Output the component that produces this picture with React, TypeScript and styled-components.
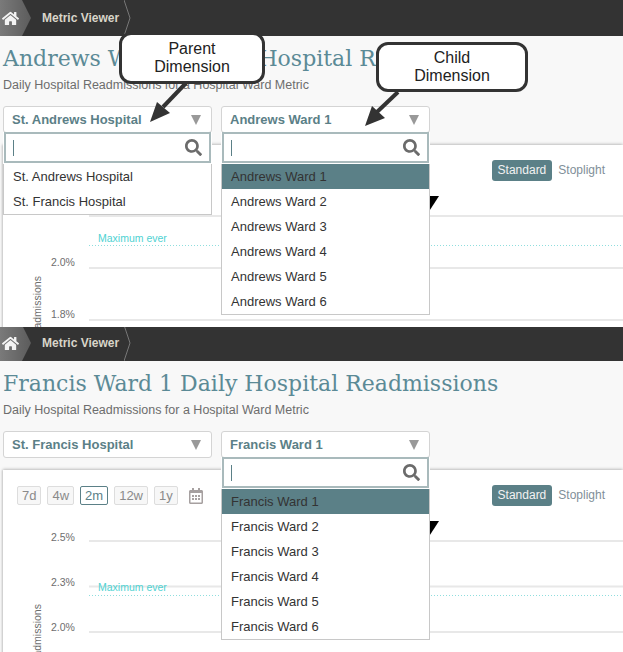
import React from 'react';
import styled, { createGlobalStyle } from 'styled-components';
import { FaHome, FaSearch, FaRegCalendarAlt } from 'react-icons/fa';

const TEAL = '#5b8087';
const SANS = '"Liberation Sans", Arial, sans-serif';

const GlobalStyle = createGlobalStyle`
  html, body {
    margin: 0;
    padding: 0;
    background: #fff;
    font-family: ${SANS};
  }
`;

const Page = styled.div`
  width: 623px;
  height: 652px;
  overflow: hidden;
`;

const Panel = styled.section<{ $height: number }>`
  position: relative;
  height: ${({ $height }) => $height}px;
  overflow: hidden;
  background: #f8f8f8;
`;

const TopBar = styled.header<{ $raised?: boolean }>`
  display: flex;
  align-items: center;
  height: 36px;
  margin-top: ${({ $raised }) => ($raised ? '-2px' : '0')};
  background: #333;
`;

const HomeTab = styled.div`
  display: flex;
  align-items: center;
  width: 31px;
  height: 36px;
  padding-left: 2px;
  box-sizing: border-box;
  color: #f4f4f4;
  font-size: 17px;
  background: linear-gradient(90deg, #7a7a7a, #5c5c5c);
  clip-path: polygon(0 0, 22px 0, 31px 50%, 22px 100%, 0 100%);
`;

const Crumb = styled.span`
  margin-left: 11px;
  color: #d9d5c9;
  font-size: 12px;
  font-weight: 700;
`;

const CrumbEnd = styled.svg`
  margin-left: 5px;
  flex: none;
`;

const Head = styled.div`
  padding: 0 3px;
  height: 109px;
  box-sizing: border-box;
`;

const Title = styled.h1`
  margin: 0;
  padding-top: 8px;
  color: #5b8a96;
  font-family: "DejaVu Serif", serif;
  font-size: 22px;
  font-weight: 400;
  line-height: 30px;
  white-space: nowrap;
`;

const Subtitle = styled.p`
  margin: 3px 0 0;
  color: #6d6d6d;
  font-size: 12.5px;
  line-height: 16px;
  white-space: nowrap;
`;

const Selectors = styled.div`
  display: flex;
  gap: 9px;
  margin-top: 13px;
`;

const SelectWrap = styled.div`
  position: relative;
  z-index: 2;
  width: 209px;
`;

const SelectBox = styled.div`
  display: flex;
  align-items: center;
  justify-content: space-between;
  height: 25px;
  padding: 0 10px 0 8px;
  background: #fff;
  border: 1px solid #d4d4d4;
  border-radius: 3px;
  color: ${TEAL};
  font-size: 13px;
  font-weight: 700;
`;

const Caret = styled.i`
  width: 0;
  height: 0;
  border-left: 5.5px solid transparent;
  border-right: 5.5px solid transparent;
  border-top: 10px solid #999;
`;

const Dropdown = styled.div`
  position: absolute;
  top: 26px;
  left: 0;
  width: 209px;
  box-sizing: border-box;
  background: #fff;
`;

const SearchBox = styled.div`
  display: flex;
  align-items: center;
  justify-content: space-between;
  height: 31px;
  margin-left: 1px;
  width: 207px;
  box-sizing: border-box;
  padding: 0 7px 0 7px;
  background: #fff;
  border: 2px solid #a9babc;
  color: #6b6b6b;
  font-size: 17px;
`;

const Cursor = styled.span`
  width: 1px;
  height: 16px;
  background: ${TEAL};
`;

const OptionList = styled.ul`
  margin: 1px 0 0;
  padding: 0;
  list-style: none;
  border: 1px solid #c8c8c8;
  border-top: 0;
  box-sizing: border-box;
`;

const Option = styled.li<{ $active?: boolean }>`
  height: 25px;
  padding-left: 9px;
  line-height: 25px;
  font-size: 13px;
  color: #333;
  background: ${({ $active }) => ($active ? TEAL : '#fff')};
`;

const Card = styled.div`
  position: relative;
  margin-left: 3px;
  height: 200px;
  background: #fff;
  box-shadow: 0 -1px 3px rgba(0, 0, 0, 0.2), -1px 0 2px rgba(0, 0, 0, 0.12);
`;

const CardBar = styled.div`
  display: flex;
  align-items: center;
  justify-content: space-between;
  height: 21px;
  padding: 15px 18px 0 14px;
`;

const Ranges = styled.div`
  display: flex;
  align-items: center;
  gap: 6px;
`;

const RangeButton = styled.span<{ $active?: boolean }>`
  padding: 0 4px;
  height: 17px;
  line-height: 17px;
  font-size: 13px;
  color: ${({ $active }) => ($active ? TEAL : '#8a8a8a')};
  background: ${({ $active }) => ($active ? '#fff' : '#f7f7f7')};
  border: 1px solid ${({ $active }) => ($active ? TEAL : '#ddd')};
  border-radius: 2px;
`;

const CalendarIcon = styled(FaRegCalendarAlt)`
  margin-left: 4px;
  color: #a6a0a0;
  font-size: 16px;
`;

const Modes = styled.div`
  display: flex;
  align-items: center;
  gap: 6px;
`;

const ModeButton = styled.span<{ $active?: boolean }>`
  padding: 0 ${({ $active }) => ($active ? '6px' : '0')};
  height: 21px;
  line-height: 20px;
  font-size: 12px;
  border-radius: 3px;
  color: ${({ $active }) => ($active ? '#f2f2f2' : '#7f8f99')};
  background: ${({ $active }) => ($active ? TEAL : 'transparent')};
`;

const Chart = styled.svg`
  display: block;
  position: absolute;
  left: -3px;
  top: 0;
  z-index: 0;
`;

const Callout = styled.div<{ $x: number; $y: number; $w: number; $h: number }>`
  position: absolute;
  z-index: 5;
  left: ${({ $x }) => $x}px;
  top: ${({ $y }) => $y}px;
  width: ${({ $w }) => $w}px;
  height: ${({ $h }) => $h}px;
  box-sizing: border-box;
  display: flex;
  align-items: center;
  justify-content: center;
  text-align: center;
  background: #fff;
  border: 3px solid #333;
  border-radius: 12px;
  color: #222;
  font-size: 16px;
  line-height: 18px;
`;

const ArrowLayer = styled.svg`
  position: absolute;
  z-index: 4;
  left: 0;
  top: 0;
`;

type Line = { y: number };
type Label = { y: number; text: string };

const GridChart = ({
  lines,
  labels,
  maxTextY,
  maxLineY,
  axisY,
}: {
  lines: Line[];
  labels: Label[];
  maxTextY: number;
  maxLineY: number;
  axisY: number;
}) => (
  <Chart width="623" height="200" viewBox="0 0 623 200">
    {lines.map((l) => (
      <line key={l.y} x1="89" x2="623" y1={l.y} y2={l.y} stroke="#e8e8e8" strokeWidth="2" />
    ))}
    <line
      x1="89"
      x2="623"
      y1={maxLineY}
      y2={maxLineY}
      stroke="#8fdede"
      strokeWidth="1"
      strokeDasharray="1 2"
    />
    <text x="98" y={maxTextY} fontSize="10.5" fill="#4fd2d2" fontFamily={SANS}>
      Maximum ever
    </text>
    {labels.map((l) => (
      <text key={l.text} x="51" y={l.y} fontSize="10.5" fill="#6e6e6e" fontFamily={SANS}>
        {l.text}
      </text>
    ))}
    <text
      transform={`translate(41 ${axisY}) rotate(-90)`}
      fontSize="10.5"
      fill="#6e6e6e"
      fontFamily={SANS}
    >
      Readmissions
    </text>
    <polygon points="427,51 439,51 428,68" fill="#000" />
  </Chart>
);

const Select = ({
  value,
  options,
  open,
}: {
  value: string;
  options?: string[];
  open?: boolean;
}) => (
  <SelectWrap>
    <SelectBox>
      {value}
      <Caret />
    </SelectBox>
    {open && options && (
      <Dropdown>
        <SearchBox>
          <Cursor />
          <FaSearch />
        </SearchBox>
        <OptionList>
          {options.map((o, i) => (
            <Option key={o} $active={o === value && options.length > 2 && i === 0}>
              {o}
            </Option>
          ))}
        </OptionList>
      </Dropdown>
    )}
  </SelectWrap>
);

const wards = (name: string) => [1, 2, 3, 4, 5, 6].map((n) => `${name} Ward ${n}`);

const ViewerBar = ({ raised }: { raised?: boolean }) => (
  <TopBar $raised={raised}>
    <HomeTab>
      <FaHome />
    </HomeTab>
    <Crumb>Metric Viewer</Crumb>
    <CrumbEnd width="7" height="36" viewBox="0 0 7 36">
      <path d="M0 0 L6 18 L0 36" fill="none" stroke="#777" />
    </CrumbEnd>
  </TopBar>
);

const ModeSwitch = () => (
  <Modes>
    <ModeButton $active>Standard</ModeButton>
    <ModeButton>Stoplight</ModeButton>
  </Modes>
);

export default function App() {
  return (
    <Page>
      <GlobalStyle />

      <Panel $height={327}>
        <ViewerBar />
        <Head>
          <Title>Andrews Ward 1 Daily Hospital Readmissions</Title>
          <Subtitle>Daily Hospital Readmissions for a Hospital Ward Metric</Subtitle>
          <Selectors>
            <Select
              value="St. Andrews Hospital"
              open
              options={['St. Andrews Hospital', 'St. Francis Hospital']}
            />
            <Select value="Andrews Ward 1" open options={wards('Andrews')} />
          </Selectors>
        </Head>
        <Card>
          <GridChart
            lines={[{ y: 71 }, { y: 123 }, { y: 175 }]}
            labels={[
              { y: 121, text: '2.0%' },
              { y: 173, text: '1.8%' },
            ]}
            maxTextY={97}
            maxLineY={100.5}
            axisY={197}
          />
          <CardBar>
            <span />
            <ModeSwitch />
          </CardBar>
        </Card>
        <Callout $x={119} $y={32} $w={146} $h={52}>
          Parent
          <br />
          Dimension
        </Callout>
        <Callout $x={376} $y={42} $w={152} $h={50}>
          Child
          <br />
          Dimension
        </Callout>
        <ArrowLayer width="623" height="327" viewBox="0 0 623 327">
          <path d="M186 83 L163 107" stroke="#333" strokeWidth="4" />
          <polygon points="150,122 157,102 170,113" fill="#333" />
          <path d="M398 92 L377 112" stroke="#333" strokeWidth="4" />
          <polygon points="365,126 372,106 385,118" fill="#333" />
        </ArrowLayer>
      </Panel>

      <Panel $height={325}>
        <ViewerBar raised />
        <Head>
          <Title>Francis Ward 1 Daily Hospital Readmissions</Title>
          <Subtitle>Daily Hospital Readmissions for a Hospital Ward Metric</Subtitle>
          <Selectors>
            <Select value="St. Francis Hospital" />
            <Select value="Francis Ward 1" open options={wards('Francis')} />
          </Selectors>
        </Head>
        <Card>
          <GridChart
            lines={[{ y: 71 }, { y: 116.5 }, { y: 162 }]}
            labels={[
              { y: 71, text: '2.5%' },
              { y: 116, text: '2.3%' },
              { y: 161, text: '2.0%' },
            ]}
            maxTextY={121}
            maxLineY={125.5}
            axisY={200}
          />
          <CardBar>
            <Ranges>
              <RangeButton>7d</RangeButton>
              <RangeButton>4w</RangeButton>
              <RangeButton $active>2m</RangeButton>
              <RangeButton>12w</RangeButton>
              <RangeButton>1y</RangeButton>
              <CalendarIcon />
            </Ranges>
            <ModeSwitch />
          </CardBar>
        </Card>
      </Panel>
    </Page>
  );
}
